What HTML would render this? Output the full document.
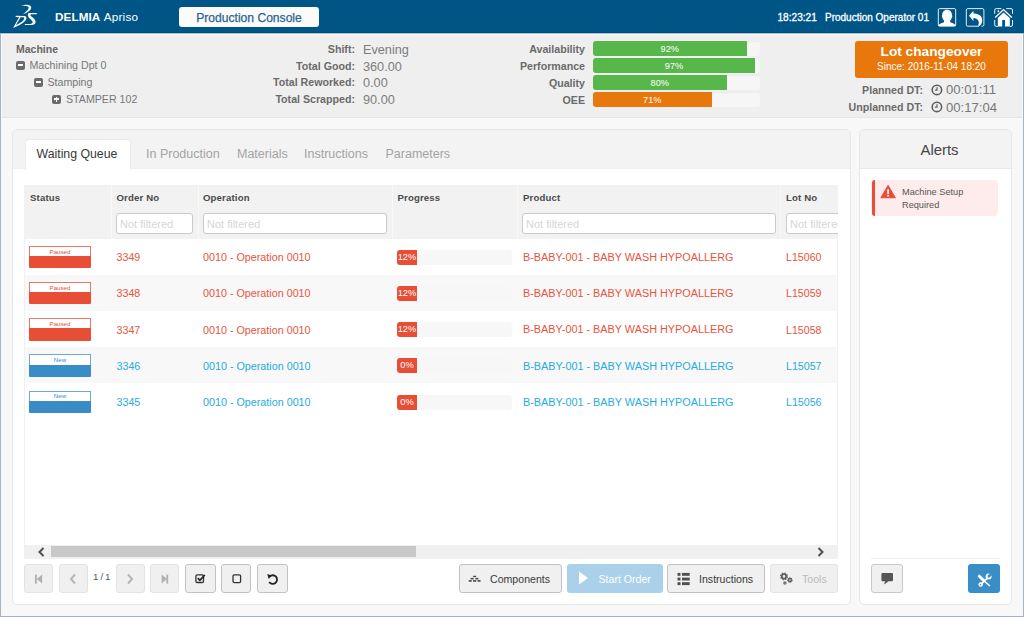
<!DOCTYPE html>
<html><head><meta charset="utf-8"><style>
html,body{margin:0;padding:0;width:1024px;height:617px;overflow:hidden;background:#f7f7f7;font-family:"Liberation Sans", sans-serif;}
.a{position:absolute;}
.t{position:absolute;white-space:nowrap;font-family:"Liberation Sans", sans-serif;}
</style></head><body>
<div class="a" style="left:0px;top:0px;width:1024px;height:617px;background:#f8f8f8;"></div>
<div class="a" style="left:0px;top:0px;width:1024px;height:33px;background:#005587;"></div>
<div class="a" style="left:0px;top:32px;width:1024px;height:1px;background:#004d7e;"></div>
<div class="a" style="left:0px;top:33px;width:1024px;height:1px;background:#aac0cf;"></div>
<div class="a" style="left:0px;top:34px;width:1024px;height:83px;background:#efefef;"></div>
<div class="a" style="left:0px;top:34px;width:1024px;height:1px;background:#f9f9f9;"></div>
<div class="a" style="left:0px;top:117px;width:1024px;height:1px;background:#e6e6e6;"></div>
<svg class="a" style="left:8px;top:2px" width="36" height="30" viewBox="0 0 36 30">
<g fill="#fff">
<path d="M13.1,3.3 C16,2.7 20,2.5 22,3.5 C23.8,4.5 23.6,6.9 21.7,8.5 C19.6,10.3 16.6,11.7 14.4,12.6 C16.4,10.9 18.9,9 20.1,7.4 C21.1,6 20.9,4.7 19.5,4.3 C17.5,3.9 15,4 13.1,3.3 Z"/>
<path fill-rule="evenodd" d="M7.8,13.8 L16.5,13.9 C19.3,14.1 18.9,17.3 16.8,19.3 C14,22 9.5,24.2 5.1,26 C7.1,22.4 9.4,18.6 11.1,15.2 L7.6,15.1 Z M12.5,15.3 L15.6,15.3 C16.7,15.5 16.4,17.4 15,18.7 C13.1,20.4 10.6,21.8 7.9,23.1 C9.4,20.6 11,17.8 12.5,15.3 Z"/>
<path d="M20.6,11.1 L28.9,11.1 L28.6,12.2 L23.2,12.3 C22,12.5 22.2,13.6 23.4,14.6 C25.6,16.2 27.7,17.9 27.6,20.2 C27.5,22.1 25.8,22.8 23.5,22.9 L16.7,22.9 L17,22 L22.4,21.9 C24.4,21.8 25,20.8 24.5,19.6 C24,18.4 22.5,17.3 21.2,16 C19.6,14.4 19.5,12.2 20.6,11.1 Z"/>
</g></svg>
<div class="t" style="top:11.30px;font-size:11.7px;line-height:11.7px;color:#fff;font-weight:bold;left:55px;"><span style="letter-spacing:0.1px">DELMIA</span> <span style="font-weight:normal;letter-spacing:0.25px">Apriso</span></div>
<div class="a" style="left:179px;top:7px;width:140px;height:20px;background:#fbfbfb;border-radius:3px;"></div>
<div class="t" style="top:11.76px;font-size:12.1px;line-height:12.1px;color:#2b6394;font-weight:normal;left:49px;width:400px;text-align:center;-webkit-text-stroke:0.25px #2b6394;">Production Console</div>
<div class="t" style="top:12.65px;font-size:10.1px;line-height:10.1px;color:#fff;font-weight:normal;left:777.5px;-webkit-text-stroke:0.3px #fff;">18:23:21</div>
<div class="t" style="top:12.73px;font-size:10px;line-height:10px;color:#fff;font-weight:normal;left:825px;-webkit-text-stroke:0.3px #fff;">Production Operator 01</div>
<svg class="a" style="left:936px;top:6px" width="80" height="23" viewBox="0 0 80 23">
<g fill="none" stroke="#fff" stroke-width="0.9">
<rect x="2.3" y="2.6" width="17.4" height="17.6" rx="1.3"/>
<path d="M43,20.2 L31.8,20.2 Q30.3,20.2 30.3,18.7 L30.3,4.1 Q30.3,2.6 31.8,2.6 L46.4,2.6 Q47.9,2.6 47.9,4.1 L47.9,18.7 Q47.9,20.2 46.4,20.2 L45.5,20.2"/>
<path d="M65.4,2.6 L60.2,2.6 Q58.7,2.6 58.7,4.1 L58.7,7.9 M58.7,14 L58.7,18.9 Q58.7,20.4 60.2,20.4 L61.8,20.4 M70.2,2.6 L75,2.6 Q76.5,2.6 76.5,4.1 L76.5,7.9 M76.5,14 L76.5,18.9 Q76.5,20.4 75,20.4 L73.8,20.4"/>
</g>
<g fill="#fff">
<path d="M11.1,3.7 C14.5,3.7 16,6.2 16,9.2 C16.4,9.8 16.4,11 15.8,11.5 C15.5,13 14.8,14 14.2,14.5 L14.2,16.2 C16,16.8 18,17.6 19.3,18.6 L19.3,20 L2.8,20 L2.8,18.6 C4.2,17.6 6.2,16.8 8,16.2 L8,14.5 C7.4,14 6.7,13 6.4,11.5 C5.8,11 5.8,9.8 6.2,9.2 C6.2,6.2 7.7,3.7 11.1,3.7 Z"/>
<path d="M33,9.8 L37.4,4.8 L37.4,7.6 C42.5,7.6 46.2,10 46.2,14 C46.2,16.5 45.3,18.5 43.6,20 L42,19.6 C42.8,18 43,16.5 42.6,15.2 C42,13.2 40,11.9 37.4,11.9 L37.4,14.9 Z"/>
<path d="M59.2,11.6 L67.5,3.6 L75.8,11.6" fill="none" stroke="#fff" stroke-width="1.4"/>
<path d="M61.8,11.9 L67.5,6.4 L73.8,11.9 L73.8,20.5 L69,20.5 L69,14 L66.2,14 L66.2,20.5 L61.8,20.5 Z"/>
<rect x="61.6" y="4.4" width="1.5" height="1.8"/>
</g></svg>
<div class="t" style="top:43.51px;font-size:10.5px;line-height:10.5px;color:#666;font-weight:bold;left:16px;">Machine</div>
<div class="a" style="left:16px;top:60.5px;width:9px;height:9px;background:#6b6b6b;border-radius:2px;"><div class="a" style="left:2px;top:3.6px;width:5px;height:1.8px;background:#fff"></div></div>
<div class="t" style="top:59.78px;font-size:10.65px;line-height:10.65px;color:#777;font-weight:normal;left:29.5px;">Machining Dpt 0</div>
<div class="a" style="left:34px;top:77.5px;width:9px;height:9px;background:#6b6b6b;border-radius:2px;"><div class="a" style="left:2px;top:3.6px;width:5px;height:1.8px;background:#fff"></div></div>
<div class="t" style="top:76.98px;font-size:10.65px;line-height:10.65px;color:#777;font-weight:normal;left:47.5px;">Stamping</div>
<div class="a" style="left:52px;top:94.5px;width:9px;height:9px;background:#6b6b6b;border-radius:2px;"><div class="a" style="left:2px;top:3.6px;width:5px;height:1.8px;background:#fff"></div><div class="a" style="left:3.6px;top:2px;width:1.8px;height:5px;background:#fff"></div></div>
<div class="t" style="top:93.88px;font-size:10.65px;line-height:10.65px;color:#777;font-weight:normal;left:66px;">STAMPER 102</div>
<div class="t" style="top:43.98px;font-size:10.65px;line-height:10.65px;color:#6a6a6a;font-weight:bold;right:669px;text-align:right;">Shift:</div>
<div class="t" style="top:43.85px;font-size:12.7px;line-height:12.7px;color:#7d7d7d;font-weight:normal;left:363px;">Evening</div>
<div class="t" style="top:60.68px;font-size:10.65px;line-height:10.65px;color:#6a6a6a;font-weight:bold;right:669px;text-align:right;">Total Good:</div>
<div class="t" style="top:60.55px;font-size:12.7px;line-height:12.7px;color:#7d7d7d;font-weight:normal;left:363px;">360.00</div>
<div class="t" style="top:77.38px;font-size:10.65px;line-height:10.65px;color:#6a6a6a;font-weight:bold;right:669px;text-align:right;">Total Reworked:</div>
<div class="t" style="top:77.25px;font-size:12.7px;line-height:12.7px;color:#7d7d7d;font-weight:normal;left:363px;">0.00</div>
<div class="t" style="top:94.08px;font-size:10.65px;line-height:10.65px;color:#6a6a6a;font-weight:bold;right:669px;text-align:right;">Total Scrapped:</div>
<div class="t" style="top:93.95px;font-size:12.7px;line-height:12.7px;color:#7d7d7d;font-weight:normal;left:363px;">90.00</div>
<div class="t" style="top:43.98px;font-size:10.65px;line-height:10.65px;color:#6a6a6a;font-weight:bold;right:439px;text-align:right;">Availability</div>
<div class="a" style="left:593px;top:41px;width:167px;height:15px;background:#f6f6f6;border-radius:3px;box-shadow:inset 0 1px 1px rgba(0,0,0,0.04);"></div>
<div class="a" style="left:593px;top:41px;width:153.6px;height:15px;background:#58b74b;border-radius:3px 0 0 3px;"></div>
<div class="t" style="top:45.31px;font-size:9.2px;line-height:9.2px;color:#fff;font-weight:normal;left:469.79999999999995px;width:400px;text-align:center;">92%</div>
<div class="t" style="top:60.98px;font-size:10.65px;line-height:10.65px;color:#6a6a6a;font-weight:bold;right:439px;text-align:right;">Performance</div>
<div class="a" style="left:593px;top:58px;width:167px;height:15px;background:#f6f6f6;border-radius:3px;box-shadow:inset 0 1px 1px rgba(0,0,0,0.04);"></div>
<div class="a" style="left:593px;top:58px;width:162.0px;height:15px;background:#58b74b;border-radius:3px 0 0 3px;"></div>
<div class="t" style="top:62.31px;font-size:9.2px;line-height:9.2px;color:#fff;font-weight:normal;left:474.0px;width:400px;text-align:center;">97%</div>
<div class="t" style="top:77.98px;font-size:10.65px;line-height:10.65px;color:#6a6a6a;font-weight:bold;right:439px;text-align:right;">Quality</div>
<div class="a" style="left:593px;top:75px;width:167px;height:15px;background:#f6f6f6;border-radius:3px;box-shadow:inset 0 1px 1px rgba(0,0,0,0.04);"></div>
<div class="a" style="left:593px;top:75px;width:133.6px;height:15px;background:#58b74b;border-radius:3px 0 0 3px;"></div>
<div class="t" style="top:79.31px;font-size:9.2px;line-height:9.2px;color:#fff;font-weight:normal;left:459.79999999999995px;width:400px;text-align:center;">80%</div>
<div class="t" style="top:94.98px;font-size:10.65px;line-height:10.65px;color:#6a6a6a;font-weight:bold;right:439px;text-align:right;">OEE</div>
<div class="a" style="left:593px;top:92px;width:167px;height:15px;background:#f6f6f6;border-radius:3px;box-shadow:inset 0 1px 1px rgba(0,0,0,0.04);"></div>
<div class="a" style="left:593px;top:92px;width:118.6px;height:15px;background:#e8780b;border-radius:3px 0 0 3px;"></div>
<div class="t" style="top:96.31px;font-size:9.2px;line-height:9.2px;color:#fff;font-weight:normal;left:452.29999999999995px;width:400px;text-align:center;">71%</div>
<div class="a" style="left:855px;top:41px;width:153px;height:37px;background:#e8780b;border-radius:3px;"></div>
<div class="t" style="top:44.70px;font-size:13.7px;line-height:13.7px;color:#fff;font-weight:bold;left:731.5px;width:400px;text-align:center;">Lot changeover</div>
<div class="t" style="top:61.73px;font-size:10px;line-height:10px;color:#fff;font-weight:normal;left:731.5px;width:400px;text-align:center;">Since: 2016-11-04 18:20</div>
<div class="t" style="top:84.68px;font-size:10.65px;line-height:10.65px;color:#6a6a6a;font-weight:bold;right:101px;text-align:right;">Planned DT:</div>
<div class="t" style="top:102.18px;font-size:10.65px;line-height:10.65px;color:#6a6a6a;font-weight:bold;right:101px;text-align:right;">Unplanned DT:</div>
<svg class="a" style="left:930.8px;top:83.7px" width="12" height="12" viewBox="0 0 12 12"><circle cx="5.9" cy="5.9" r="4.7" fill="none" stroke="#5e5e5e" stroke-width="1.6"/><path d="M6,3.2 L6,6.2 L4,6.2" fill="none" stroke="#5e5e5e" stroke-width="1.2"/></svg>
<div class="t" style="top:83.41px;font-size:13.1px;line-height:13.1px;color:#777;font-weight:normal;left:946px;">00:01:11</div>
<svg class="a" style="left:930.8px;top:101.10000000000001px" width="12" height="12" viewBox="0 0 12 12"><circle cx="5.9" cy="5.9" r="4.7" fill="none" stroke="#5e5e5e" stroke-width="1.6"/><path d="M6,3.2 L6,6.2 L4,6.2" fill="none" stroke="#5e5e5e" stroke-width="1.2"/></svg>
<div class="t" style="top:100.81px;font-size:13.1px;line-height:13.1px;color:#777;font-weight:normal;left:946px;">00:17:04</div>
<div class="a" style="left:12px;top:129px;width:837px;height:474px;background:#fff;border:1px solid #e6e6e6;border-radius:5px;"></div>
<div class="a" style="left:13px;top:130px;width:837px;height:38px;background:#f3f3f3;border-radius:4px 4px 0 0;"></div>
<div class="a" style="left:13px;top:168px;width:837px;height:1px;background:#efefef;"></div>
<div class="a" style="left:25px;top:139px;width:104px;height:30px;background:#fff;border:1px solid #ececec;border-bottom:none;border-radius:4px 4px 0 0;"></div>
<div class="t" style="top:147.99px;font-size:12.3px;line-height:12.3px;color:#383838;font-weight:normal;left:36.5px;">Waiting Queue</div>
<div class="t" style="top:148.02px;font-size:12.5px;line-height:12.5px;color:#a3a3a3;font-weight:normal;left:146px;">In Production</div>
<div class="t" style="top:148.02px;font-size:12.5px;line-height:12.5px;color:#a3a3a3;font-weight:normal;left:237px;">Materials</div>
<div class="t" style="top:148.02px;font-size:12.5px;line-height:12.5px;color:#a3a3a3;font-weight:normal;left:304px;">Instructions</div>
<div class="t" style="top:148.02px;font-size:12.5px;line-height:12.5px;color:#a3a3a3;font-weight:normal;left:385.5px;">Parameters</div>
<div class="a" style="left:24px;top:185px;width:814px;height:54px;background:#f2f2f2;"></div>
<div class="a" style="left:111px;top:185px;width:1px;height:54px;background:#f9f9f9;"></div>
<div class="a" style="left:198px;top:185px;width:1px;height:54px;background:#f9f9f9;"></div>
<div class="a" style="left:392px;top:185px;width:1px;height:54px;background:#f9f9f9;"></div>
<div class="a" style="left:517px;top:185px;width:1px;height:54px;background:#f9f9f9;"></div>
<div class="a" style="left:780px;top:185px;width:1px;height:54px;background:#f9f9f9;"></div>
<div class="t" style="top:193.07px;font-size:9.6px;line-height:9.6px;color:#4a4a4a;font-weight:bold;letter-spacing:0.15px;left:30px;">Status</div>
<div class="t" style="top:193.07px;font-size:9.6px;line-height:9.6px;color:#4a4a4a;font-weight:bold;letter-spacing:0.15px;left:116.5px;">Order No</div>
<div class="t" style="top:193.07px;font-size:9.6px;line-height:9.6px;color:#4a4a4a;font-weight:bold;letter-spacing:0.15px;left:203px;">Operation</div>
<div class="t" style="top:193.07px;font-size:9.6px;line-height:9.6px;color:#4a4a4a;font-weight:bold;letter-spacing:0.15px;left:397.5px;">Progress</div>
<div class="t" style="top:193.07px;font-size:9.6px;line-height:9.6px;color:#4a4a4a;font-weight:bold;letter-spacing:0.15px;left:523px;">Product</div>
<div class="t" style="top:193.07px;font-size:9.6px;line-height:9.6px;color:#4a4a4a;font-weight:bold;letter-spacing:0.15px;left:786px;">Lot No</div>
<div class="a" style="left:116px;top:213px;width:77px;height:21px;background:#fff;border:1px solid #c9c9c9;border-radius:3px;box-sizing:border-box;"></div>
<div class="t" style="top:218.69px;font-size:11px;line-height:11px;color:#d6d6d6;font-weight:normal;left:120px;">Not filtered</div>
<div class="a" style="left:203px;top:213px;width:184px;height:21px;background:#fff;border:1px solid #c9c9c9;border-radius:3px;box-sizing:border-box;"></div>
<div class="t" style="top:218.69px;font-size:11px;line-height:11px;color:#d6d6d6;font-weight:normal;left:207px;">Not filtered</div>
<div class="a" style="left:522px;top:213px;width:254px;height:21px;background:#fff;border:1px solid #c9c9c9;border-radius:3px;box-sizing:border-box;"></div>
<div class="t" style="top:218.69px;font-size:11px;line-height:11px;color:#d6d6d6;font-weight:normal;left:526px;">Not filtered</div>
<div class="a" style="left:786px;top:213px;width:60px;height:21px;background:#fff;border:1px solid #c9c9c9;border-radius:3px;box-sizing:border-box;"></div>
<div class="t" style="top:218.69px;font-size:11px;line-height:11px;color:#d6d6d6;font-weight:normal;left:790px;">Not filtered</div>
<div class="a" style="left:838px;top:185px;width:12px;height:54px;background:#fff;"></div>
<div class="a" style="left:838px;top:213px;width:12px;height:22px;background:#fff;"></div>
<div class="a" style="left:24px;top:239px;width:814px;height:36px;background:#ffffff;"></div>
<div class="a" style="left:29px;top:246.0px;width:62px;height:10.2px;background:#fff;border:1px solid #ee7565;border-bottom:none;box-sizing:border-box;"></div>
<div class="a" style="left:29px;top:256.1px;width:62px;height:12.2px;background:#e84e36;border-radius:0 0 1px 1px;"></div>
<div class="t" style="top:248.75px;font-size:6.2px;line-height:6.2px;color:#e84e36;font-weight:normal;left:-140px;width:400px;text-align:center;">Paused</div>
<div class="t" style="top:252.24px;font-size:10.7px;line-height:10.7px;color:#e8553e;font-weight:normal;left:116.5px;">3349</div>
<div class="t" style="top:252.20px;font-size:10.75px;line-height:10.75px;color:#e8553e;font-weight:normal;left:203px;">0010 - Operation 0010</div>
<div class="a" style="left:397px;top:250.0px;width:115px;height:15px;background:#f7f7f7;border-radius:3px;"></div>
<div class="a" style="left:397px;top:250.0px;width:20px;height:15px;background:#e84e36;border-radius:3px 0 0 3px;"></div>
<div class="t" style="top:253.03px;font-size:9.3px;line-height:9.3px;color:#fff;font-weight:normal;left:207px;width:400px;text-align:center;">12%</div>
<div class="t" style="top:252.12px;font-size:10.85px;line-height:10.85px;color:#e8553e;font-weight:normal;left:523px;">B-BABY-001 - BABY WASH HYPOALLERG</div>
<div class="t" style="top:252.28px;font-size:10.65px;line-height:10.65px;color:#e8553e;font-weight:normal;left:786px;">L15060</div>
<div class="a" style="left:24px;top:275px;width:814px;height:36px;background:#f8f8f8;"></div>
<div class="a" style="left:29px;top:282.15px;width:62px;height:10.2px;background:#fff;border:1px solid #ee7565;border-bottom:none;box-sizing:border-box;"></div>
<div class="a" style="left:29px;top:292.25px;width:62px;height:12.2px;background:#e84e36;border-radius:0 0 1px 1px;"></div>
<div class="t" style="top:284.90px;font-size:6.2px;line-height:6.2px;color:#e84e36;font-weight:normal;left:-140px;width:400px;text-align:center;">Paused</div>
<div class="t" style="top:288.39px;font-size:10.7px;line-height:10.7px;color:#e8553e;font-weight:normal;left:116.5px;">3348</div>
<div class="t" style="top:288.35px;font-size:10.75px;line-height:10.75px;color:#e8553e;font-weight:normal;left:203px;">0010 - Operation 0010</div>
<div class="a" style="left:397px;top:286.15px;width:115px;height:15px;background:#f7f7f7;border-radius:3px;"></div>
<div class="a" style="left:397px;top:286.15px;width:20px;height:15px;background:#e84e36;border-radius:3px 0 0 3px;"></div>
<div class="t" style="top:289.18px;font-size:9.3px;line-height:9.3px;color:#fff;font-weight:normal;left:207px;width:400px;text-align:center;">12%</div>
<div class="t" style="top:288.27px;font-size:10.85px;line-height:10.85px;color:#e8553e;font-weight:normal;left:523px;">B-BABY-001 - BABY WASH HYPOALLERG</div>
<div class="t" style="top:288.43px;font-size:10.65px;line-height:10.65px;color:#e8553e;font-weight:normal;left:786px;">L15059</div>
<div class="a" style="left:24px;top:311px;width:814px;height:36px;background:#ffffff;"></div>
<div class="a" style="left:29px;top:318.3px;width:62px;height:10.2px;background:#fff;border:1px solid #ee7565;border-bottom:none;box-sizing:border-box;"></div>
<div class="a" style="left:29px;top:328.40000000000003px;width:62px;height:12.2px;background:#e84e36;border-radius:0 0 1px 1px;"></div>
<div class="t" style="top:321.05px;font-size:6.2px;line-height:6.2px;color:#e84e36;font-weight:normal;left:-140px;width:400px;text-align:center;">Paused</div>
<div class="t" style="top:324.54px;font-size:10.7px;line-height:10.7px;color:#e8553e;font-weight:normal;left:116.5px;">3347</div>
<div class="t" style="top:324.50px;font-size:10.75px;line-height:10.75px;color:#e8553e;font-weight:normal;left:203px;">0010 - Operation 0010</div>
<div class="a" style="left:397px;top:322.3px;width:115px;height:15px;background:#f7f7f7;border-radius:3px;"></div>
<div class="a" style="left:397px;top:322.3px;width:20px;height:15px;background:#e84e36;border-radius:3px 0 0 3px;"></div>
<div class="t" style="top:325.33px;font-size:9.3px;line-height:9.3px;color:#fff;font-weight:normal;left:207px;width:400px;text-align:center;">12%</div>
<div class="t" style="top:324.42px;font-size:10.85px;line-height:10.85px;color:#e8553e;font-weight:normal;left:523px;">B-BABY-001 - BABY WASH HYPOALLERG</div>
<div class="t" style="top:324.58px;font-size:10.65px;line-height:10.65px;color:#e8553e;font-weight:normal;left:786px;">L15058</div>
<div class="a" style="left:24px;top:347px;width:814px;height:36px;background:#f8f8f8;"></div>
<div class="a" style="left:29px;top:354.45px;width:62px;height:10.2px;background:#fff;border:1px solid #6aa9d8;border-bottom:none;box-sizing:border-box;"></div>
<div class="a" style="left:29px;top:364.55px;width:62px;height:12.2px;background:#3a8cc6;border-radius:0 0 1px 1px;"></div>
<div class="t" style="top:357.20px;font-size:6.2px;line-height:6.2px;color:#3a8cc6;font-weight:normal;left:-140px;width:400px;text-align:center;">New</div>
<div class="t" style="top:360.69px;font-size:10.7px;line-height:10.7px;color:#29abe0;font-weight:normal;left:116.5px;">3346</div>
<div class="t" style="top:360.65px;font-size:10.75px;line-height:10.75px;color:#29abe0;font-weight:normal;left:203px;">0010 - Operation 0010</div>
<div class="a" style="left:397px;top:358.45px;width:115px;height:15px;background:#f7f7f7;border-radius:3px;"></div>
<div class="a" style="left:397px;top:358.45px;width:20px;height:15px;background:#e84e36;border-radius:3px 0 0 3px;"></div>
<div class="t" style="top:361.48px;font-size:9.3px;line-height:9.3px;color:#fff;font-weight:normal;left:207px;width:400px;text-align:center;">0%</div>
<div class="t" style="top:360.57px;font-size:10.85px;line-height:10.85px;color:#29abe0;font-weight:normal;left:523px;">B-BABY-001 - BABY WASH HYPOALLERG</div>
<div class="t" style="top:360.73px;font-size:10.65px;line-height:10.65px;color:#29abe0;font-weight:normal;left:786px;">L15057</div>
<div class="a" style="left:24px;top:384px;width:814px;height:36px;background:#ffffff;"></div>
<div class="a" style="left:29px;top:390.6px;width:62px;height:10.2px;background:#fff;border:1px solid #6aa9d8;border-bottom:none;box-sizing:border-box;"></div>
<div class="a" style="left:29px;top:400.70000000000005px;width:62px;height:12.2px;background:#3a8cc6;border-radius:0 0 1px 1px;"></div>
<div class="t" style="top:393.35px;font-size:6.2px;line-height:6.2px;color:#3a8cc6;font-weight:normal;left:-140px;width:400px;text-align:center;">New</div>
<div class="t" style="top:396.84px;font-size:10.7px;line-height:10.7px;color:#29abe0;font-weight:normal;left:116.5px;">3345</div>
<div class="t" style="top:396.80px;font-size:10.75px;line-height:10.75px;color:#29abe0;font-weight:normal;left:203px;">0010 - Operation 0010</div>
<div class="a" style="left:397px;top:394.6px;width:115px;height:15px;background:#f7f7f7;border-radius:3px;"></div>
<div class="a" style="left:397px;top:394.6px;width:20px;height:15px;background:#e84e36;border-radius:3px 0 0 3px;"></div>
<div class="t" style="top:397.63px;font-size:9.3px;line-height:9.3px;color:#fff;font-weight:normal;left:207px;width:400px;text-align:center;">0%</div>
<div class="t" style="top:396.72px;font-size:10.85px;line-height:10.85px;color:#29abe0;font-weight:normal;left:523px;">B-BABY-001 - BABY WASH HYPOALLERG</div>
<div class="t" style="top:396.88px;font-size:10.65px;line-height:10.65px;color:#29abe0;font-weight:normal;left:786px;">L15056</div>
<div class="a" style="left:24px;top:239px;width:1px;height:306px;background:#eef0f3;"></div>
<div class="a" style="left:837px;top:239px;width:1px;height:306px;background:#f1f1f1;"></div>
<div class="a" style="left:24px;top:545px;width:814px;height:14px;background:#f0f0f0;"></div>
<div class="a" style="left:51px;top:546px;width:365px;height:11px;background:#c8c8c8;"></div>
<svg class="a" style="left:36px;top:546px" width="12" height="12" viewBox="0 0 12 12"><path d="M7.5,2 L3.5,6 L7.5,10" fill="none" stroke="#505050" stroke-width="2"/></svg>
<svg class="a" style="left:815px;top:546px" width="12" height="12" viewBox="0 0 12 12"><path d="M3.5,2 L7.5,6 L3.5,10" fill="none" stroke="#505050" stroke-width="2"/></svg>
<div class="a" style="left:24px;top:564px;width:29px;height:29px;background:#f0f0f0;border:1px solid #e3e3e3;border-radius:3px;box-sizing:border-box;"></div>
<div class="a" style="left:59px;top:564px;width:29px;height:29px;background:#f0f0f0;border:1px solid #e3e3e3;border-radius:3px;box-sizing:border-box;"></div>
<div class="a" style="left:116px;top:564px;width:29px;height:29px;background:#f0f0f0;border:1px solid #e3e3e3;border-radius:3px;box-sizing:border-box;"></div>
<div class="a" style="left:150px;top:564px;width:29px;height:29px;background:#f0f0f0;border:1px solid #e3e3e3;border-radius:3px;box-sizing:border-box;"></div>
<div class="a" style="left:185px;top:564px;width:31px;height:29px;background:#f0f0f0;border:1px solid #c2c2c2;border-radius:3px;box-sizing:border-box;"></div>
<div class="a" style="left:221px;top:564px;width:30px;height:29px;background:#f0f0f0;border:1px solid #c2c2c2;border-radius:3px;box-sizing:border-box;"></div>
<div class="a" style="left:257px;top:564px;width:31px;height:29px;background:#f0f0f0;border:1px solid #c2c2c2;border-radius:3px;box-sizing:border-box;"></div>
<div class="t" style="top:572.29px;font-size:9.7px;line-height:9.7px;color:#555;font-weight:normal;letter-spacing:-0.35px;left:93px;">1 / 1</div>
<svg class="a" style="left:0;top:560px" width="300" height="40" viewBox="0 0 300 40">
<g fill="#b0b0b0"><rect x="35" y="14.6" width="1.8" height="9"/><path d="M42.2,14.6 L36.8,19 L42.2,23.5 Z"/>
<path d="M161.6,14.6 L167,19 L161.6,23.5 Z"/><rect x="166.4" y="14.6" width="1.8" height="9"/></g>
<g fill="none" stroke="#b5b5b5" stroke-width="2"><path d="M75,14.5 L71,19 L75,23.5"/><path d="M128,14.5 L132,19 L128,23.5"/></g>
<g fill="none" stroke="#333" stroke-width="1.3"><rect x="195.9" y="14.9" width="7.6" height="7.6" rx="1.3"/><rect x="233" y="14.8" width="7.6" height="7.8" rx="1.3"/></g>
<path d="M197.8,18.2 L199.9,20.3 L204.8,15" fill="none" stroke="#222" stroke-width="1.8"/>
<g transform="translate(1.2,0)"><path d="M268.5,16.5 A4.3,4.3 0 1 1 268,22" fill="none" stroke="#222" stroke-width="1.8"/><path d="M266,14 L270.5,15.5 L267.5,19 Z" fill="#222"/></g>
</svg>
<div class="a" style="left:459px;top:564px;width:103px;height:29px;background:#f0f0f0;border:1px solid #c2c2c2;border-radius:3px;box-sizing:border-box;"></div>
<svg class="a" style="left:468px;top:575px" width="14" height="8" viewBox="0 0 14 8"><g fill="#444"><rect x="5.1" y="0.8" width="3" height="1.3"/><rect x="2.6" y="2.9" width="3" height="1.5"/><rect x="7.4" y="2.9" width="3" height="1.5"/><rect x="0.7" y="5.1" width="3" height="1.6"/><rect x="5" y="5.1" width="3.2" height="1.6"/><rect x="9.5" y="5.1" width="3" height="1.6"/></g></svg>
<div class="t" style="top:574.33px;font-size:10.6px;line-height:10.6px;color:#3a3a3a;font-weight:normal;left:490px;">Components</div>
<div class="a" style="left:567px;top:564px;width:96px;height:29px;background:#abd0e9;border-radius:3px;"></div>
<svg class="a" style="left:577px;top:570px" width="14" height="16" viewBox="0 0 14 16"><path d="M2,1.5 L11,8 L2,14.5 Z" fill="#fff"/></svg>
<div class="t" style="top:574.33px;font-size:10.6px;line-height:10.6px;color:#fff;font-weight:normal;left:598.5px;">Start Order</div>
<div class="a" style="left:667px;top:564px;width:98px;height:29px;background:#f0f0f0;border:1px solid #c2c2c2;border-radius:3px;box-sizing:border-box;"></div>
<svg class="a" style="left:676px;top:572px" width="15" height="14" viewBox="0 0 15 14"><g fill="#505050"><rect x="1.5" y="0.9" width="3" height="2.9"/><rect x="6" y="0.9" width="7.7" height="2.9"/><rect x="1.5" y="5.6" width="3" height="2.9"/><rect x="6" y="5.6" width="7.7" height="2.9"/><rect x="1.5" y="10.2" width="3" height="2.9"/><rect x="6" y="10.2" width="7.7" height="2.9"/></g></svg>
<div class="t" style="top:574.33px;font-size:10.6px;line-height:10.6px;color:#3a3a3a;font-weight:normal;left:699px;">Instructions</div>
<div class="a" style="left:770px;top:564px;width:68px;height:29px;background:#f0f0f0;border:1px solid #e3e3e3;border-radius:3px;box-sizing:border-box;"></div>
<svg class="a" style="left:777px;top:570px" width="18" height="18" viewBox="0 0 18 18"><g fill="none" stroke="#5f5f5f"><circle cx="7" cy="6.4" r="2.2" stroke-width="1.8"/><circle cx="7" cy="6.4" r="3.4" stroke-width="1.3" stroke-dasharray="1.35,1.32"/><circle cx="12.9" cy="10.1" r="1.5" stroke-width="1.5"/><circle cx="12.9" cy="10.1" r="2.4" stroke-width="1" stroke-dasharray="1.1,0.8"/></g><circle cx="7.9" cy="13" r="1.8" fill="#777"/></svg>
<div class="t" style="top:574.33px;font-size:10.6px;line-height:10.6px;color:#bbb;font-weight:normal;left:802px;">Tools</div>
<div class="a" style="left:859px;top:129px;width:151px;height:474px;background:#fff;border:1px solid #e6e6e6;border-radius:5px;"></div>
<div class="a" style="left:860px;top:130px;width:151px;height:38px;background:#f3f3f3;border-radius:4px 4px 0 0;"></div>
<div class="a" style="left:860px;top:168px;width:151px;height:1px;background:#e9e9e9;"></div>
<div class="t" style="top:143.19px;font-size:14.9px;line-height:14.9px;color:#454545;font-weight:normal;left:739.5px;width:400px;text-align:center;">Alerts</div>
<div class="a" style="left:871px;top:180px;width:127px;height:36px;background:#fdeceb;border-radius:3px;"></div>
<div class="a" style="left:871.5px;top:180px;width:3.2px;height:36px;background:#e84e36;border-radius:3px 0 0 3px;"></div>
<svg class="a" style="left:879px;top:183px" width="18" height="17" viewBox="0 0 18 17"><path d="M9.1,2.4 L16.2,14.8 L2,14.8 Z" fill="#e84e36" stroke="#e84e36" stroke-width="1.1" stroke-linejoin="round"/><rect x="8.25" y="6.4" width="1.7" height="4.4" fill="#fff"/><rect x="8.25" y="11.8" width="1.7" height="1.7" fill="#fff"/></svg>
<div class="t" style="top:187.71px;font-size:9.2px;line-height:9.2px;color:#555;font-weight:normal;left:902px;">Machine Setup</div>
<div class="t" style="top:200.51px;font-size:9.2px;line-height:9.2px;color:#555;font-weight:normal;left:902px;">Required</div>
<div class="a" style="left:871px;top:558px;width:129px;height:1px;background:#efefef;"></div>
<div class="a" style="left:871px;top:564px;width:32px;height:29px;background:#f0f0f0;border:1px solid #c8c8c8;border-radius:3px;box-sizing:border-box;"></div>
<svg class="a" style="left:880px;top:571px" width="16" height="16" viewBox="0 0 16 16"><path d="M2.4,2 L12,2 Q13,2 13,3 L13,9.3 Q13,10.3 12,10.3 L8.6,10.3 L4.2,13.6 L5,10.3 L2.4,10.3 Q1.4,10.3 1.4,9.3 L1.4,3 Q1.4,2 2.4,2 Z" fill="#555"/></svg>
<div class="a" style="left:968px;top:564px;width:32px;height:29px;background:#3a8ec7;border-radius:3px;"></div>
<svg class="a" style="left:970.5px;top:566.5px" width="26" height="26" viewBox="0 0 26 26"><g stroke="#fff" fill="none" stroke-linecap="round"><path d="M8.3,9.2 L12.9,13.8" stroke-width="3"/><path d="M12.9,13.8 L18.5,18.6" stroke-width="1.4"/><path d="M16.5,10.8 L10.6,16.6" stroke-width="1.7"/></g><circle cx="17.6" cy="9.6" r="3" fill="#fff"/><path d="M16.7,8.7 L18.9,6.3 L20.9,8.3 L18.5,10.5 Z" fill="#3a8ec7"/><circle cx="17.6" cy="9.6" r="1.1" fill="#3a8ec7"/><circle cx="9.7" cy="17.5" r="2.2" fill="#fff"/><circle cx="9.5" cy="17.8" r="0.8" fill="#3a8ec7"/></svg>
<div class="a" style="left:1px;top:34px;width:1px;height:582px;background:#f9f9f9;"></div>
<div class="a" style="left:1022px;top:34px;width:1px;height:582px;background:#f9f9f9;"></div>
<div class="a" style="left:1px;top:615px;width:1022px;height:1px;background:#f9f9f9;"></div>
<div class="a" style="left:0px;top:33px;width:1px;height:584px;background:#a3b3c9;"></div>
<div class="a" style="left:1023px;top:33px;width:1px;height:584px;background:#a3b3c9;"></div>
<div class="a" style="left:0px;top:616px;width:1024px;height:1px;background:#a3b3c9;"></div>
</body></html>
